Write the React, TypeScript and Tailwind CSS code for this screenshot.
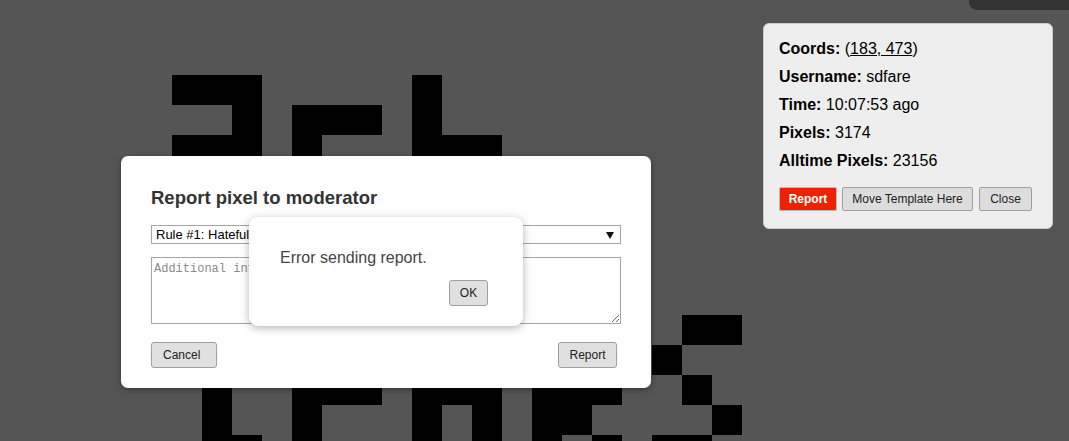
import React from "react";

const CELLS: [number, number][] = [
  [0, 0], [0, 1], [0, 2], [0, 8],
  [1, 2], [1, 4], [1, 5], [1, 6], [1, 8],
  [2, 0], [2, 1], [2, 2], [2, 4], [2, 8], [2, 9], [2, 10],
  [3, 4], [3, 8], [4, 4], [5, 8],
  [8, 17], [8, 18],
  [9, 16],
  [10, 1], [10, 4], [10, 5], [10, 6], [10, 8], [10, 9], [10, 10], [10, 12], [10, 13], [10, 14], [10, 17],
  [11, 1], [11, 4], [11, 8], [11, 10], [11, 12], [11, 13], [11, 18],
  [12, 1], [12, 2], [12, 4], [12, 8], [12, 10], [12, 12], [12, 14], [12, 16], [12, 17],
];

function PixelCanvas() {
  return (
    <svg
      className="absolute inset-0"
      width={1069}
      height={441}
      viewBox="0 0 1069 441"
      shapeRendering="crispEdges"
    >
      {CELLS.map(([r, c]) => (
        <rect key={`${r}-${c}`} x={172 + c * 30} y={75 + r * 30} width={30} height={30} fill="#000" />
      ))}
    </svg>
  );
}

export default function App() {
  return (
    <div
      className="relative w-[1069px] h-[441px] overflow-hidden bg-[#555555]"
      style={{ fontFamily: '"Liberation Sans", Arial, sans-serif' }}
    >
      <PixelCanvas />

      {/* top-right dark bar */}
      <div className="absolute right-0 top-0 w-[100px] h-[10px] bg-[#333333] rounded-bl-[8px]" />

      {/* info panel */}
      <div className="absolute left-[763px] top-[23px] w-[290px] h-[206px] bg-[#eeeeee] border border-[#c9c9c9] rounded-[6px] pl-[15px] pt-[11px] text-[16px] text-black">
        <div className="h-[28px] leading-[28px]">
          <span className="font-bold">Coords:</span> (<span className="underline">183, 473</span>)
        </div>
        <div className="h-[28px] leading-[28px]">
          <span className="font-bold">Username:</span> sdfare
        </div>
        <div className="h-[28px] leading-[28px]">
          <span className="font-bold">Time:</span> 10:07:53 ago
        </div>
        <div className="h-[28px] leading-[28px]">
          <span className="font-bold">Pixels:</span> 3174
        </div>
        <div className="h-[28px] leading-[28px]">
          <span className="font-bold">Alltime Pixels:</span> 23156
        </div>
        <div className="flex mt-[12px] text-[12px]">
          <button className="w-[58px] h-[24px] bg-[#ee2200] text-white font-bold border border-[#b8b8b8] rounded-[2px]">
            Report
          </button>
          <button className="ml-[5px] w-[131px] h-[24px] bg-[#dddddd] text-[#222] border border-[#a0a0a0] rounded-[2px]">
            Move Template Here
          </button>
          <button className="ml-[6px] w-[53px] h-[24px] bg-[#dddddd] text-[#222] border border-[#a0a0a0] rounded-[2px]">
            Close
          </button>
        </div>
      </div>

      {/* report dialog */}
      <div className="absolute left-[121px] top-[156px] w-[530px] h-[232px] bg-white rounded-[7px] shadow-[0_2px_6px_rgba(0,0,0,0.35)] px-[30px] pt-[31px]">
        <h3 className="h-[22px] leading-[22px] text-[18.5px] font-bold text-[#333333]">
          Report pixel to moderator
        </h3>
        <div className="relative mt-[16px] h-[19px] border border-[#a5a5a5] bg-white flex items-center pl-[4px] text-[13px] text-black">
          Rule #1: Hateful/derogatory speech or symbols
          <svg className="absolute right-[6px] top-[6px]" width="8" height="7" viewBox="0 0 8 7">
            <path d="M0 0 H8 L4 7 Z" fill="#111" />
          </svg>
        </div>
        <textarea
          readOnly
          placeholder="Additional information (optional)"
          className="mt-[13px] block w-full h-[67px] border border-[#a5a5a5] p-[2px] text-[12px] placeholder:text-[#8a8a8a] outline-none"
          style={{ fontFamily: '"Liberation Mono", "DejaVu Sans Mono", monospace' }}
        />
        <div className="mt-[18px] flex justify-between text-[12px] text-[#222]">
          <button className="w-[66px] h-[26px] bg-[#e0e0e0] border border-[#a0a0a0] rounded-[3px] text-left pl-[11px]">
            Cancel
          </button>
          <button className="mr-[4px] w-[59px] h-[26px] bg-[#e0e0e0] border border-[#a0a0a0] rounded-[3px]">
            Report
          </button>
        </div>
      </div>

      {/* alert */}
      <div className="absolute left-[249px] top-[217px] w-[274px] h-[109px] bg-white rounded-[9px] shadow-[0_2px_8px_rgba(0,0,0,0.3)] pl-[31px] pr-[35px] pt-[32px]">
        <div className="h-[18px] leading-[18px] text-[16px] text-[#444444]">Error sending report.</div>
        <div className="mt-[13px] flex justify-end">
          <button className="w-[39px] h-[26px] bg-[#e0e0e0] border border-[#a0a0a0] rounded-[3px] text-[12px] text-[#222]">
            OK
          </button>
        </div>
      </div>
    </div>
  );
}
